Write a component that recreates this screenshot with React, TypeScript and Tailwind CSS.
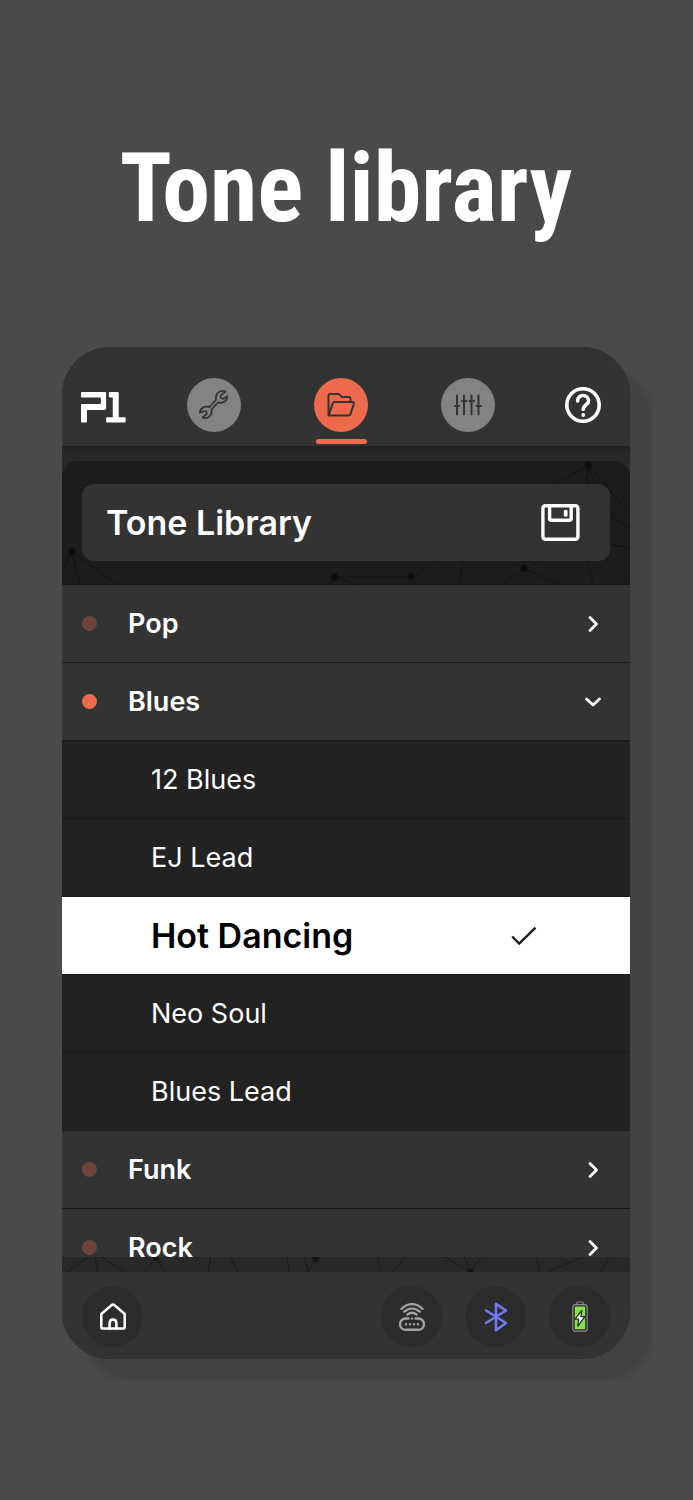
import { useState } from "react"

type Group = { name: string; tones: string[] }

const groups: Group[] = [
  { name: "Pop", tones: [] },
  { name: "Blues", tones: ["12 Blues", "EJ Lead", "Hot Dancing", "Neo Soul", "Blues Lead"] },
  { name: "Funk", tones: [] },
  { name: "Rock", tones: [] },
]

const Logo = () => (
  <svg viewBox="0 0 136 93" className="w-[45px] h-[31px]" fill="#fff" role="img" aria-label="P1">
    <path d="M3 0H72Q76 0 76 4V49Q76 54 71 54H18V89Q18 92 15 92H3Q0 92 0 89V39Q0 36 3 36H57Q60 36 60 33V19Q60 16 57 16H3Q0 16 0 13V3Q0 0 3 0Z" />
    <path d="M87 0H111Q114 0 114 3V76H132Q135 76 135 79V89Q135 92 132 92H79Q76 92 76 89V79Q76 76 79 76H96V16H87Q84 16 84 13V3Q84 0 87 0Z" />
  </svg>
)

const WrenchIcon = () => (
  <svg viewBox="-1 -1 32 32" className="w-8 h-8" fill="none" stroke="#333" strokeWidth="1.8" strokeLinejoin="round">
    <path d="M26.5 1.6C21.5 -.6 16 3 17 10L10.5 17C5 15.8 1 18.5 1 22.5L6 21Q8.5 21.8 7.4 24.5L3.5 27.4C8 29.8 13.5 26 12.5 19.5L19 12.5C24.5 13.5 28.6 11 28.2 6.5L24.2 8.8Q20.8 8.6 22 5Z" />
  </svg>
)

const FolderIcon = () => (
  <svg viewBox="0 0 28 24" className="w-7 h-6" fill="none" stroke="#333" strokeWidth="2" strokeLinejoin="round" strokeLinecap="round">
    <path d="M1.5 21.5V3Q1.5 1 3.5 1H11Q12.3 1 13 2L14.5 4H21.5Q23.5 4 23.5 6V8.5" />
    <path d="M1.8 22L5.6 10.6Q6.1 9 7.8 9H25.3Q27.4 9 26.8 10.8L23.6 20.8Q23.1 22.5 21.4 22.5H2.5Q1.5 22.5 1.8 22" />
  </svg>
)

const SlidersIcon = () => (
  <svg viewBox="0 0 28 22" className="w-7 h-[22px]" fill="none" stroke="#333" strokeWidth="2" strokeLinecap="round">
    <path d="M3 1.5V20.5M10 1.5V20.5M17.5 1.5V20.5M24.5 1.5V20.5M1 12H5M8 7H12.5M15.5 7H20M22.5 12H27" />
  </svg>
)

const HelpIcon = () => (
  <svg viewBox="0 0 36 36" className="w-9 h-9" fill="none" stroke="#fff" strokeWidth="3.6" strokeLinecap="round">
    <circle cx="18" cy="18" r="16.2" />
    <path d="M12.6 14C12.6 6.5 23.6 7 23.6 14C23.6 18 18.2 17.5 18.2 22.5" />
    <circle cx="18.2" cy="28" r="1.9" fill="#fff" stroke="none" />
  </svg>
)

const SaveIcon = () => (
  <svg viewBox="0 0 39 37" className="w-[39px] h-[37px]" fill="none" stroke="#fff" strokeWidth="3.4" strokeLinejoin="round">
    <rect x="1.9" y="1.8" width="35" height="33.4" rx="2.5" />
    <path d="M8.6 2V14.5Q8.6 16.2 10.3 16.2H28.5Q30.2 16.2 30.2 14.5V2" />
    <rect x="22.8" y="5.8" width="3.8" height="7" rx="1.6" fill="#fff" stroke="none" />
  </svg>
)

const Chevron = ({ open }: { open: boolean }) => (
  <svg viewBox="0 0 18 18" className="w-[18px] h-[18px]" fill="none" stroke="#fff" strokeWidth="2.8" strokeLinecap="round" strokeLinejoin="round">
    <path d={open ? "M2.5 6L9 12L15.5 6" : "M6 2.5L12.5 9L6 15.5"} />
  </svg>
)

const CheckIcon = () => (
  <svg viewBox="0 0 26 20" className="w-[26px] h-5" fill="none" stroke="#1c1c1c" strokeWidth="2.4">
    <path d="M1.2 10.5L8.2 17.5L24.5 1.6" />
  </svg>
)

const HomeIcon = () => (
  <svg viewBox="0 0 26 27" className="w-[26px] h-[27px]" fill="none" stroke="#fff" strokeWidth="2.5" strokeLinejoin="round" strokeLinecap="round">
    <path d="M1.3 11V24Q1.3 25.6 2.9 25.6H23.1Q24.7 25.6 24.7 24V11L14.3 2Q13 .9 11.7 2Z" />
    <path d="M9.6 25.5V20.5C9.6 15.3 16.4 15.3 16.4 20.5V25.5" />
  </svg>
)

const RouterIcon = () => (
  <svg viewBox="0 0 28 28" className="w-7 h-7" fill="none" stroke="#a3a3a3" strokeWidth="2.4" strokeLinecap="round">
    <path d="M3.5 5.8C10 -.4 18 -.4 24.5 5.8M6.3 8.7C11 4.6 17 4.6 21.7 8.7M9.3 11.6C12.3 9.2 15.7 9.2 18.7 11.6" />
    <path d="M10.5 15.5H7A5.7 5.7 0 0 0 7 26.8H21A5.7 5.7 0 0 0 21 15.5H17.5" />
    <path d="M14 15.5V15.6M8 21.2V21.3M12 21.2V21.3M16 21.2V21.3M20 21.2V21.3" />
  </svg>
)

const BluetoothIcon = () => (
  <svg viewBox="0 0 24 30" className="w-6 h-[30px]" fill="none" stroke="#707cf0" strokeWidth="2.6" strokeLinejoin="round" strokeLinecap="round">
    <path d="M2 8.5L22 21L12 28.2V1.8L22 8.5L2 21" />
  </svg>
)

const BatteryIcon = () => (
  <svg viewBox="0 0 16 31" className="w-4 h-[31px]" fill="none">
    <path d="M4.7 3.2V2.5Q4.7 1 6.2 1H9.8Q11.3 1 11.3 2.5V3.2" stroke="#8a8a8a" strokeWidth="1.2" />
    <rect x=".8" y="3.6" width="14.4" height="26.6" rx="2.4" stroke="#8a8a8a" strokeWidth="1.2" />
    <rect x="2.8" y="5.6" width="10.4" height="22.6" rx=".6" fill="#84e34c" />
    <path d="M9.8 9.5L3 18.2H6.6L5.8 25.2L13 15.6H9Z" fill="#fff" stroke="#2c2c2c" strokeWidth="1.3" strokeLinejoin="round" />
  </svg>
)

// faint constellation drawn behind the panels
const TopNetwork = () => (
  <svg viewBox="0 0 569 124" preserveAspectRatio="none" className="absolute inset-0 w-full h-full" stroke="#131313" fill="#0d0d0d" aria-hidden="true">
    <path
      fill="none"
      d="M10 91L-8 125M10 91L18 125M10 91L58 125M273 116L267 125M273 116L277 125M273 116H350L374 101M273 116L300 125M350 116L360 125M401 101L398 125M463 108L449 101M463 108V101M463 108L477 101M463 108L439 125M463 108L502 125M527 4L495 23M527 4L526 23M527 4L534 23M527 4L569 53M548 53L569 68M548 83L569 87M527 101L532 125M557 125L569 118"
    />
    <circle cx="10" cy="91" r="3.5" />
    <circle cx="273" cy="116" r="3.5" />
    <circle cx="350" cy="115" r="3.5" />
    <circle cx="463" cy="107" r="3.5" />
    <circle cx="527" cy="4" r="3.5" />
  </svg>
)

const BottomNetwork = () => (
  <svg viewBox="0 0 569 15" preserveAspectRatio="none" className="block w-full h-[15px]" stroke="#1a1a1a" fill="#161616" aria-hidden="true">
    <path
      fill="none"
      d="M26 0L5 15M33 0L36 15M40 0L63 15M96 0L81 15M94 0L103 15M149 0L146 15M169 0L177 15M225 0L228 15M243 0L247 15M258 0L245 15M316 0L319 15M344 0L331 15M384 0L409 15M403 0L409 15M420 0L409 15M476 0L478 15M521 0L487 15M548 0L540 15"
    />
    <circle cx="94" cy="1" r="3" />
    <circle cx="254" cy="2" r="3.5" />
    <circle cx="409" cy="15" r="3" />
  </svg>
)

const tabs = [
  { label: "Settings", icon: <WrenchIcon /> },
  { label: "Library", icon: <FolderIcon /> },
  { label: "Equalizer", icon: <SlidersIcon /> },
]

const roundButton = "w-[61px] h-[61px] rounded-full bg-[#2c2c2c] flex items-center justify-center"

const App = () => {
  const [activeTab, setActiveTab] = useState("Library")
  const [openGroup, setOpenGroup] = useState("Blues")
  const [tone, setTone] = useState("Hot Dancing")

  return (
    <div className="min-h-screen bg-[#4a4a4a] pl-[62px] pr-[63px] pb-[141px] text-white font-['Inter',sans-serif]">
      <h1 className="pt-[132px] mb-[103px] text-center whitespace-nowrap text-[96px] leading-[112px] font-bold font-['Roboto_Condensed','Open_Sans_Condensed','DejaVu_Sans_Condensed','Liberation_Sans',sans-serif]">
        Tone library
      </h1>

      <main className="rounded-[48px] overflow-hidden bg-[#282828] shadow-[22px_22px_5px_#424242]">
        <header className="h-[99px] bg-[#333] pl-[19px] pr-5 pt-[31px] flex items-start justify-between">
          <div className="h-[54px] pt-1 flex items-center">
            <Logo />
          </div>
          <nav className="flex gap-[73px]">
            {tabs.map(({ label, icon }) => (
              <button key={label} aria-label={label} onClick={() => setActiveTab(label)} className="flex flex-col items-center gap-[7px]">
                <span className={`w-[54px] h-[54px] rounded-full flex items-center justify-center ${activeTab === label ? "bg-[#ee6a4d]" : "bg-[#838383]"}`}>
                  {icon}
                </span>
                {activeTab === label && <span className="w-[51px] h-[5px] rounded-full bg-[#ee6a4d]" />}
              </button>
            ))}
          </nav>
          <button aria-label="Help" className="w-[54px] h-[54px] flex items-center justify-center">
            <HelpIcon />
          </button>
        </header>

        <div className="h-[15px] bg-linear-to-b from-[#202020] to-[#292929] to-50%" />

        <section className="relative rounded-t-2xl bg-[#1c1c1c] px-5 pt-[23px] pb-6">
          <TopNetwork />
          <div className="relative h-[77px] rounded-xl bg-[#333] pl-6 pr-[30px] flex items-center justify-between">
            <h2 className="text-[34px] leading-10 font-semibold">Tone Library</h2>
            <button aria-label="Save tone">
              <SaveIcon />
            </button>
          </div>
        </section>

        <ul className="h-[672px] overflow-hidden flex flex-col gap-px bg-[#1a1a1a]">
          {groups.map(({ name, tones }) => {
            const open = openGroup === name
            return (
              <li key={name} className="shrink-0 flex flex-col gap-px">
                <button aria-expanded={open} onClick={() => setOpenGroup(open ? "" : name)} className="h-[77px] w-full bg-[#333] pl-5 pr-7 flex items-center text-left">
                  <span className={`w-[15px] h-[15px] rounded-full ${open ? "bg-[#ee6a4d]" : "bg-[#6c443c]"}`} />
                  <span className="flex-1 pl-[31px] text-[27px] leading-8 font-semibold">{name}</span>
                  <Chevron open={open} />
                </button>
                {open &&
                  tones.map((t) => (
                    <button
                      key={t}
                      aria-pressed={t === tone}
                      onClick={() => setTone(t)}
                      className={`h-[77px] w-full pl-[89px] pr-[93px] flex items-center justify-between text-left ${
                        t === tone ? "bg-white text-black text-[34px] leading-10 font-semibold" : "bg-[#222] text-[27px] leading-8"
                      }`}
                    >
                      {t}
                      {t === tone && <CheckIcon />}
                    </button>
                  ))}
              </li>
            )
          })}
        </ul>

        <BottomNetwork />

        <footer className="h-[87px] bg-[#333] px-5 pt-[14px] flex items-start justify-between">
          <button aria-label="Home" className={roundButton}>
            <HomeIcon />
          </button>
          <div className="flex gap-[23px]">
            <button aria-label="Network" className={roundButton}>
              <RouterIcon />
            </button>
            <button aria-label="Bluetooth" className={roundButton}>
              <BluetoothIcon />
            </button>
            <button aria-label="Battery" className={roundButton}>
              <BatteryIcon />
            </button>
          </div>
        </footer>
      </main>
    </div>
  )
}

export default App
